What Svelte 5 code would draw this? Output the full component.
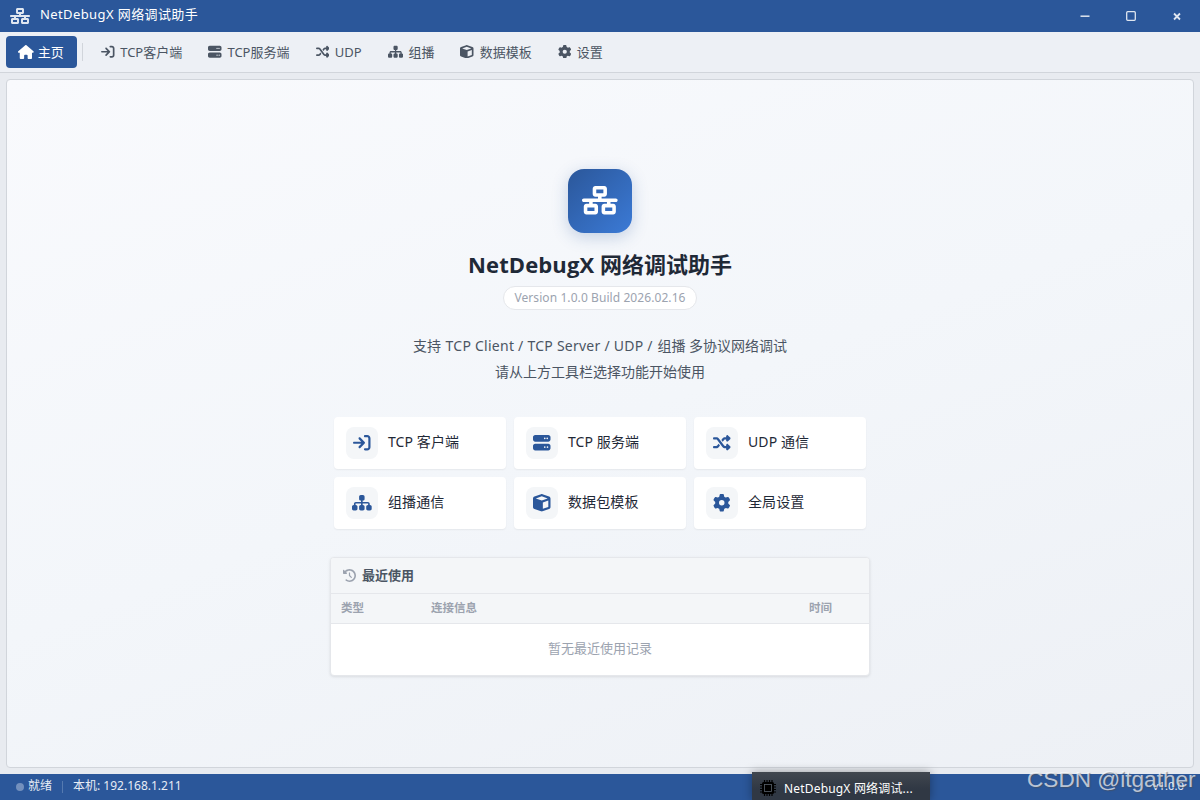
<script>
  // icon outlines, with the width of each viewBox (height is always 512)
  const icons = {
    network: {
      w: 640,
      d: "M256 64l128 0 0 64-128 0 0-64zM240 0c-26.5 0-48 21.5-48 48l0 96c0 26.5 21.5 48 48 48l48 0 0 32L32 224c-17.7 0-32 14.3-32 32s14.3 32 32 32l96 0 0 32-48 0c-26.5 0-48 21.5-48 48l0 96c0 26.5 21.5 48 48 48l160 0c26.5 0 48-21.5 48-48l0-96c0-26.5-21.5-48-48-48l-48 0 0-32 256 0 0 32-48 0c-26.5 0-48 21.5-48 48l0 96c0 26.5 21.5 48 48 48l160 0c26.5 0 48-21.5 48-48l0-96c0-26.5-21.5-48-48-48l-48 0 0-32 96 0c17.7 0 32-14.3 32-32s-14.3-32-32-32l-256 0 0-32 48 0c26.5 0 48-21.5 48-48l0-96c0-26.5-21.5-48-48-48L240 0zM96 448l0-64 128 0 0 64L96 448zm320-64l128 0 0 64-128 0 0-64z",
    },
    house: {
      w: 576,
      d: "M575.8 255.5c0 18-15 32.1-32 32.1l-32 0 .7 160.2c0 2.7-.2 5.4-.5 8.1l0 16.2c0 22.1-17.9 40-40 40l-16 0c-1.1 0-2.2 0-3.3-.1c-1.4 .1-2.8 .1-4.2 .1L416 512l-24 0c-22.1 0-40-17.9-40-40l0-24 0-64c0-17.7-14.3-32-32-32l-64 0c-17.7 0-32 14.3-32 32l0 64 0 24c0 22.1-17.9 40-40 40l-24 0-31.9 0c-1.5 0-3-.1-4.5-.2c-1.2 .1-2.4 .2-3.6 .2l-16 0c-22.1 0-40-17.9-40-40l0-112c0-.9 0-1.9 .1-2.8l0-69.7-32 0c-18 0-32-14-32-32.1c0-9 3-17 10-24L266.4 8c7-7 15-8 22-8s15 2 21 7L564.8 231.5c8 7 12 15 11 24z",
    },
    login: {
      w: 512,
      d: "M352 96l64 0c17.7 0 32 14.3 32 32l0 256c0 17.7-14.3 32-32 32l-64 0c-17.7 0-32 14.3-32 32s14.3 32 32 32l64 0c53 0 96-43 96-96l0-256c0-53-43-96-96-96l-64 0c-17.7 0-32 14.3-32 32s14.3 32 32 32zm-9.4 182.6c12.5-12.5 12.5-32.8 0-45.3l-128-128c-12.5-12.5-32.8-12.5-45.3 0s-12.5 32.8 0 45.3L242.7 224 32 224c-17.7 0-32 14.3-32 32s14.3 32 32 32l210.7 0-73.4 73.4c-12.5 12.5-12.5 32.8 0 45.3s32.8 12.5 45.3 0l128-128z",
    },
    server: {
      w: 512,
      d: "M64 32C28.7 32 0 60.7 0 96l0 64c0 35.3 28.7 64 64 64l384 0c35.3 0 64-28.7 64-64l0-64c0-35.3-28.7-64-64-64L64 32zm280 72a24 24 0 1 1 0 48 24 24 0 1 1 0-48zm48 24a24 24 0 1 1 48 0 24 24 0 1 1 -48 0zM64 288c-35.3 0-64 28.7-64 64l0 64c0 35.3 28.7 64 64 64l384 0c35.3 0 64-28.7 64-64l0-64c0-35.3-28.7-64-64-64L64 288zm280 72a24 24 0 1 1 0 48 24 24 0 1 1 0-48zm56 24a24 24 0 1 1 48 0 24 24 0 1 1 -48 0z",
    },
    shuffle: {
      w: 512,
      d: "M403.8 34.4c12-5 25.7-2.2 34.9 6.9l64 64c6 6 9.4 14.1 9.4 22.6s-3.4 16.6-9.4 22.6l-64 64c-9.2 9.2-22.9 11.9-34.9 6.9s-19.8-16.6-19.8-29.6l0-32-32 0c-10.1 0-19.6 4.7-25.6 12.8L284 229.3 244 176l31.2-41.6C293.3 110.2 321.8 96 352 96l32 0 0-32c0-12.9 7.8-24.6 19.8-29.6zM164 282.7L204 336l-31.2 41.6C154.7 401.8 126.2 416 96 416l-64 0c-17.7 0-32-14.3-32-32s14.3-32 32-32l64 0c10.1 0 19.6-4.7 25.6-12.8L164 282.7zm274.6 188c-9.2 9.2-22.9 11.9-34.9 6.9s-19.8-16.6-19.8-29.6l0-32-32 0c-30.2 0-58.7-14.2-76.8-38.4L121.6 172.8c-6-8.1-15.5-12.8-25.6-12.8l-64 0c-17.7 0-32-14.3-32-32s14.3-32 32-32l64 0c30.2 0 58.7 14.2 76.8 38.4L326.4 339.2c6 8.1 15.5 12.8 25.6 12.8l32 0 0-32c0-12.9 7.8-24.6 19.8-29.6s25.7-2.2 34.9 6.9l64 64c6 6 9.4 14.1 9.4 22.6s-3.4 16.6-9.4 22.6l-64 64z",
    },
    sitemap: {
      w: 576,
      d: "M208 80c0-26.5 21.5-48 48-48l64 0c26.5 0 48 21.5 48 48l0 64c0 26.5-21.5 48-48 48l-8 0 0 40 152 0c30.9 0 56 25.1 56 56l0 32 8 0c26.5 0 48 21.5 48 48l0 64c0 26.5-21.5 48-48 48l-64 0c-26.5 0-48-21.5-48-48l0-64c0-26.5 21.5-48 48-48l8 0 0-32c0-4.4-3.6-8-8-8l-152 0 0 40 8 0c26.5 0 48 21.5 48 48l0 64c0 26.5-21.5 48-48 48l-64 0c-26.5 0-48-21.5-48-48l0-64c0-26.5 21.5-48 48-48l8 0 0-40-152 0c-4.4 0-8 3.6-8 8l0 32 8 0c26.5 0 48 21.5 48 48l0 64c0 26.5-21.5 48-48 48l-64 0c-26.5 0-48-21.5-48-48l0-64c0-26.5 21.5-48 48-48l8 0 0-32c0-30.9 25.1-56 56-56l152 0 0-40-8 0c-26.5 0-48-21.5-48-48l0-64z",
    },
    cube: {
      w: 512,
      d: "M234.5 5.7c13.9-5 29.1-5 43.1 0l192 68.6C495 83.4 512 107.5 512 134.6l0 242.9c0 27-17 51.2-42.5 60.3l-192 68.6c-13.9 5-29.1 5-43.1 0l-192-68.6C17 428.6 0 404.5 0 377.4L0 134.6c0-27 17-51.2 42.5-60.3l192-68.6zM256 66L82.3 128 256 190l173.7-62L256 66zm32 368.6l160-57.1 0-188L288 246.6l0 188z",
    },
    gear: {
      w: 512,
      d: "M495.9 166.6c3.2 8.7 .5 18.4-6.4 24.6l-43.3 39.4c1.1 8.3 1.7 16.8 1.7 25.4s-.6 17.1-1.7 25.4l43.3 39.4c6.9 6.2 9.6 15.9 6.4 24.6c-4.4 11.9-9.7 23.3-15.8 34.3l-4.7 8.1c-6.6 11-14 21.4-22.1 31.2c-5.9 7.2-15.7 9.6-24.5 6.8l-55.7-17.7c-13.4 10.3-28.2 18.9-44 25.4l-12.5 57.1c-2 9.1-9 16.3-18.2 17.8c-13.8 2.3-28 3.5-42.5 3.5s-28.7-1.2-42.5-3.5c-9.2-1.5-16.2-8.7-18.2-17.8l-12.5-57.1c-15.8-6.5-30.6-15.1-44-25.4L83.1 425.9c-8.8 2.8-18.6 .3-24.5-6.8c-8.1-9.8-15.5-20.2-22.1-31.2l-4.7-8.1c-6.1-11-11.4-22.4-15.8-34.3c-3.2-8.7-.5-18.4 6.4-24.6l43.3-39.4C64.6 273.1 64 264.6 64 256s.6-17.1 1.7-25.4L22.4 191.2c-6.9-6.2-9.6-15.9-6.4-24.6c4.4-11.9 9.7-23.3 15.8-34.3l4.7-8.1c6.6-11 14-21.4 22.1-31.2c5.9-7.2 15.7-9.6 24.5-6.8l55.7 17.7c13.4-10.3 28.2-18.9 44-25.4l12.5-57.1c2-9.1 9-16.3 18.2-17.8C227.3 1.2 241.5 0 256 0s28.7 1.2 42.5 3.5c9.2 1.5 16.2 8.7 18.2 17.8l12.5 57.1c15.8 6.5 30.6 15.1 44 25.4l55.7-17.7c8.8-2.8 18.6-.3 24.5 6.8c8.1 9.8 15.5 20.2 22.1 31.2l4.7 8.1c6.1 11 11.4 22.4 15.8 34.3zM256 336a80 80 0 1 0 0-160 80 80 0 1 0 0 160z",
    },
    history: {
      w: 512,
      d: "M75 75L41 41C25.9 25.9 0 36.6 0 57.9L0 168c0 13.3 10.7 24 24 24l110.1 0c21.4 0 32.1-25.9 17-41l-30.8-30.8C155 85.5 203 64 256 64c106 0 192 86 192 192s-86 192-192 192c-40.8 0-78.6-12.7-109.7-34.4c-14.5-10.1-34.4-6.6-44.6 7.9s-6.6 34.4 7.9 44.6C151.2 495 201.7 512 256 512c141.4 0 256-114.6 256-256S397.4 0 256 0C185.3 0 121.3 28.7 75 75zm181 53c-13.3 0-24 10.7-24 24l0 104c0 6.4 2.5 12.5 7 17l72 72c9.4 9.4 24.6 9.4 33.9 0s9.4-24.6 0-33.9l-65-65 0-94.1c0-13.3-10.7-24-24-24z",
    },
  };

  // toolbar tabs
  const tabs = [
    { name: "client", icon: "login", display: "TCP客户端" },
    { name: "server", icon: "server", display: "TCP服务端" },
    { name: "udp", icon: "shuffle", display: "UDP" },
    { name: "multicast", icon: "sitemap", display: "组播" },
    { name: "template", icon: "cube", display: "数据模板" },
    { name: "settings", icon: "gear", display: "设置" },
  ];

  // shortcut cards on the home page
  const shortcuts = [
    { name: "client", icon: "login", display: "TCP 客户端" },
    { name: "server", icon: "server", display: "TCP 服务端" },
    { name: "udp", icon: "shuffle", display: "UDP 通信" },
    { name: "multicast", icon: "sitemap", display: "组播通信" },
    { name: "template", icon: "cube", display: "数据包模板" },
    { name: "settings", icon: "gear", display: "全局设置" },
  ];

  let active = "home";
  const open = (name) => (active = name);
</script>

<style>
  :global(body) {
    margin: 0;
    overflow: hidden;
  }

  .app {
    display: flex;
    flex-direction: column;
    width: 1200px;
    height: 800px;
    background: #e8ebf0;
    color: #1f2937;
    font-family: "Noto Sans", "Noto Sans CJK SC", sans-serif;
    font-size: 13px;
    position: relative;
    overflow: hidden;
    white-space: nowrap;
  }

  button {
    border: 0;
    padding: 0;
    background: none;
    color: inherit;
    font: inherit;
  }

  svg {
    display: block;
    flex: none;
  }

  .titlebar {
    display: flex;
    align-items: center;
    height: 32px;
    flex: none;
    padding-left: 10px;
    background: #2b579a;
    color: #fff;
  }

  .titlebar .name {
    flex: 1;
    margin-left: 10px;
    line-height: 29px;
    height: 32px;
    letter-spacing: 0.4px;
  }

  .titlebar svg {
    opacity: 0.85;
  }

  .window-button {
    display: grid;
    place-items: center;
    width: 46px;
    height: 32px;
  }

  .toolbar {
    display: flex;
    align-items: center;
    height: 40px;
    flex: none;
    padding: 0 6px;
    background: #edf0f5;
    border-bottom: 1px solid #d1d5db;
    color: #4b5563;
  }

  .tab {
    display: flex;
    align-items: center;
    gap: 5.7px;
    height: 32px;
    padding: 0 13px 1px;
    border-radius: 4px;
    line-height: 30px;
  }

  .tab.active {
    width: 71px;
    gap: 4px;
    padding: 0 12px 1px;
    background: #2b579a;
    color: #fff;
  }

  .divider {
    width: 1px;
    height: 18px;
    margin: 0 5px;
    background: #d1d5db;
  }

  .page {
    flex: 1;
    box-sizing: border-box;
    margin: 6px;
    display: flex;
    flex-direction: column;
    align-items: center;
    padding-top: 89px;
    border: 1px solid #d1d5db;
    border-radius: 4px;
    background: linear-gradient(160deg, #f9fafd 0%, #f3f6fa 50%, #edf0f5 100%);
  }

  .logo {
    display: grid;
    place-items: center;
    box-sizing: border-box;
    width: 64px;
    height: 64px;
    padding-bottom: 1px;
    border-radius: 16px;
    background: linear-gradient(135deg, #2b579a, #3b7ad6);
    color: #fff;
    box-shadow: 0 4px 16px rgba(43, 87, 154, 0.25);
  }

  h1 {
    margin: 16px 0 0;
    font-size: 22px;
    font-weight: 700;
    line-height: 31px;
    height: 37px;
  }

  h1 .brand {
    font-family: "Open Sans", sans-serif;
    letter-spacing: 0.1px;
  }

  .version {
    box-sizing: border-box;
    width: 194px;
    height: 24px;
    border: 1px solid #e5e7eb;
    border-radius: 12px;
    background: #fff;
    color: #9ca3af;
    font-size: 12px;
    line-height: 22px;
    letter-spacing: 0.08px;
    text-align: center;
  }

  .intro {
    margin: 23px 0 0;
    font-size: 14px;
    line-height: 26px;
    text-align: center;
    color: #4b5563;
  }

  .protocols {
    letter-spacing: 0.25px;
    margin: 0 1px;
  }

  .shortcuts {
    display: grid;
    grid-template-columns: repeat(3, 172px);
    gap: 8px;
    margin-top: 32px;
  }

  .card {
    display: flex;
    align-items: center;
    gap: 10px;
    height: 52px;
    padding: 0 12px;
    border-radius: 4px;
    background: #fff;
    font-size: 14px;
    letter-spacing: 0.1px;
    box-shadow: 0 1px 2px rgba(0, 0, 0, 0.06);
  }

  .card-label {
    padding-bottom: 5px;
  }

  .card-icon {
    display: grid;
    place-items: center;
    width: 32px;
    height: 32px;
    border-radius: 8px;
    background: #f4f6f8;
    color: #2b579a;
  }

  .recent {
    box-sizing: border-box;
    width: 540px;
    height: 119px;
    margin-top: 28px;
    border: 1px solid #e5e7eb;
    border-radius: 4px;
    background: #fff;
    overflow: hidden;
    box-shadow: 0 1px 3px rgba(0, 0, 0, 0.1);
  }

  .recent-title {
    display: flex;
    align-items: center;
    gap: 6px;
    height: 35px;
    padding-left: 12px;
    border-bottom: 1px solid #e5e7eb;
    background: #f4f6f8;
    color: #4b5563;
    font-weight: 600;
  }

  .recent-title span {
    padding-bottom: 3px;
  }

  .recent-title svg {
    color: #9ca3af;
  }

  .recent-head {
    display: grid;
    grid-template-columns: 90px 378px 1fr;
    height: 29px;
    padding-left: 10px;
    border-bottom: 1px solid #e5e7eb;
    background: #f4f6f8;
    color: #9ca3af;
    font-size: 11.5px;
    font-weight: 600;
    line-height: 28px;
  }

  .empty {
    line-height: 49px;
    text-align: center;
    color: #9ca3af;
  }

  .statusbar {
    display: flex;
    align-items: center;
    height: 26px;
    flex: none;
    padding: 0 16px;
    background: #2b579a;
    color: #e6ecf5;
    font-size: 12px;
    line-height: 24px;
  }

  .statusbar .text {
    height: 26px;
  }

  .dot {
    width: 8px;
    height: 8px;
    margin-right: 4px;
    border-radius: 50%;
    background: #7390bd;
  }

  .separator {
    width: 1px;
    height: 12px;
    margin: 0 10px;
    background: #557ab0;
  }

  .build {
    margin-left: auto;
    font-size: 11.3px;
  }

  .taskbar-item {
    position: absolute;
    left: 752px;
    top: 772px;
    box-sizing: border-box;
    width: 178px;
    height: 28px;
    display: flex;
    align-items: center;
    gap: 8px;
    padding: 4px 8px 0;
    background: linear-gradient(#41474f, #303844 60%);
    color: #fff;
    font-size: 12px;
    letter-spacing: 0.18px;
    box-shadow: 0 0 10px rgba(0, 0, 0, 0.35);
  }

  .watermark {
    position: absolute;
    left: 1027px;
    top: 766px;
    font-family: "Liberation Sans", sans-serif;
    font-size: 22.6px;
    line-height: 28px;
    color: rgba(255, 255, 255, 0.68);
    text-shadow: 1px 1px 1px rgba(70, 80, 95, 0.7);
  }
</style>

{#snippet icon(name, size)}
  <svg width={(size * icons[name].w) / 512} height={size} viewBox="0 0 {icons[name].w} 512" fill="currentColor">
    <path d={icons[name].d} />
  </svg>
{/snippet}

<div class="app">
  <header class="titlebar">
    {@render icon("network", 16)}
    <span class="name">NetDebugX 网络调试助手</span>
    <button class="window-button" aria-label="minimize">
      <svg width="10" height="10" viewBox="0 0 10 10"><path d="M.5 5.2h9" stroke="#fff" stroke-width="1.5" /></svg>
    </button>
    <button class="window-button" aria-label="maximize">
      <svg width="10" height="10" viewBox="0 0 10 10"><rect x=".7" y=".7" width="8.6" height="8.6" rx="1" fill="none" stroke="#fff" stroke-width="1.3" /></svg>
    </button>
    <button class="window-button" aria-label="close">
      <svg width="10" height="10" viewBox="0 0 10 10"><path d="M2 2.5l6 6M8 2.5l-6 6" stroke="#fff" stroke-width="1.8" /></svg>
    </button>
  </header>

  <nav class="toolbar">
    <button class="tab" class:active={active == "home"} on:click={() => open("home")}>
      {@render icon("house", 14)}<span>主页</span>
    </button>
    <span class="divider"></span>
    {#each tabs as tab}
      <button class="tab" class:active={active == tab.name} on:click={() => open(tab.name)}>
        {@render icon(tab.icon, 13.5)}<span>{tab.display}</span>
      </button>
    {/each}
  </nav>

  <main class="page">
    <div class="logo">{@render icon("network", 28.5)}</div>
    <h1><span class="brand">NetDebugX</span> 网络调试助手</h1>
    <div class="version">Version 1.0.0 Build 2026.02.16</div>
    <p class="intro">
      支持 <span class="protocols">TCP Client / TCP Server / UDP /</span> 组播 多协议网络调试<br />请从上方工具栏选择功能开始使用
    </p>

    <div class="shortcuts">
      {#each shortcuts as item}
        <button class="card" on:click={() => open(item.name)}>
          <span class="card-icon">{@render icon(item.icon, 17.5)}</span>
          <span class="card-label">{item.display}</span>
        </button>
      {/each}
    </div>

    <section class="recent">
      <div class="recent-title">{@render icon("history", 13)}<span>最近使用</span></div>
      <div class="recent-head"><span>类型</span><span>连接信息</span><span>时间</span></div>
      <div class="empty">暂无最近使用记录</div>
    </section>
  </main>

  <footer class="statusbar">
    <span class="dot"></span><span class="text">就绪</span>
    <span class="separator"></span>
    <span class="text">本机: 192.168.1.211</span>
    <span class="text build">v1.0.0</span>
  </footer>

  <div class="taskbar-item">
    <svg width="16" height="16" viewBox="0 0 16 16" stroke="#000">
      <path d="M4.5 0v16M7 0v16M9.5 0v16M12 0v16M0 4.5h16M0 7h16M0 9.5h16M0 12h16" stroke-width="1.2" />
      <rect x="2" y="2" width="12" height="12" rx="1.5" stroke="none" />
      <rect x="4.5" y="4.5" width="7" height="7" fill="none" stroke="#59616b" stroke-width=".8" />
    </svg>
    <span>NetDebugX 网络调试...</span>
  </div>
  <div class="watermark">CSDN @itgather</div>
</div>
